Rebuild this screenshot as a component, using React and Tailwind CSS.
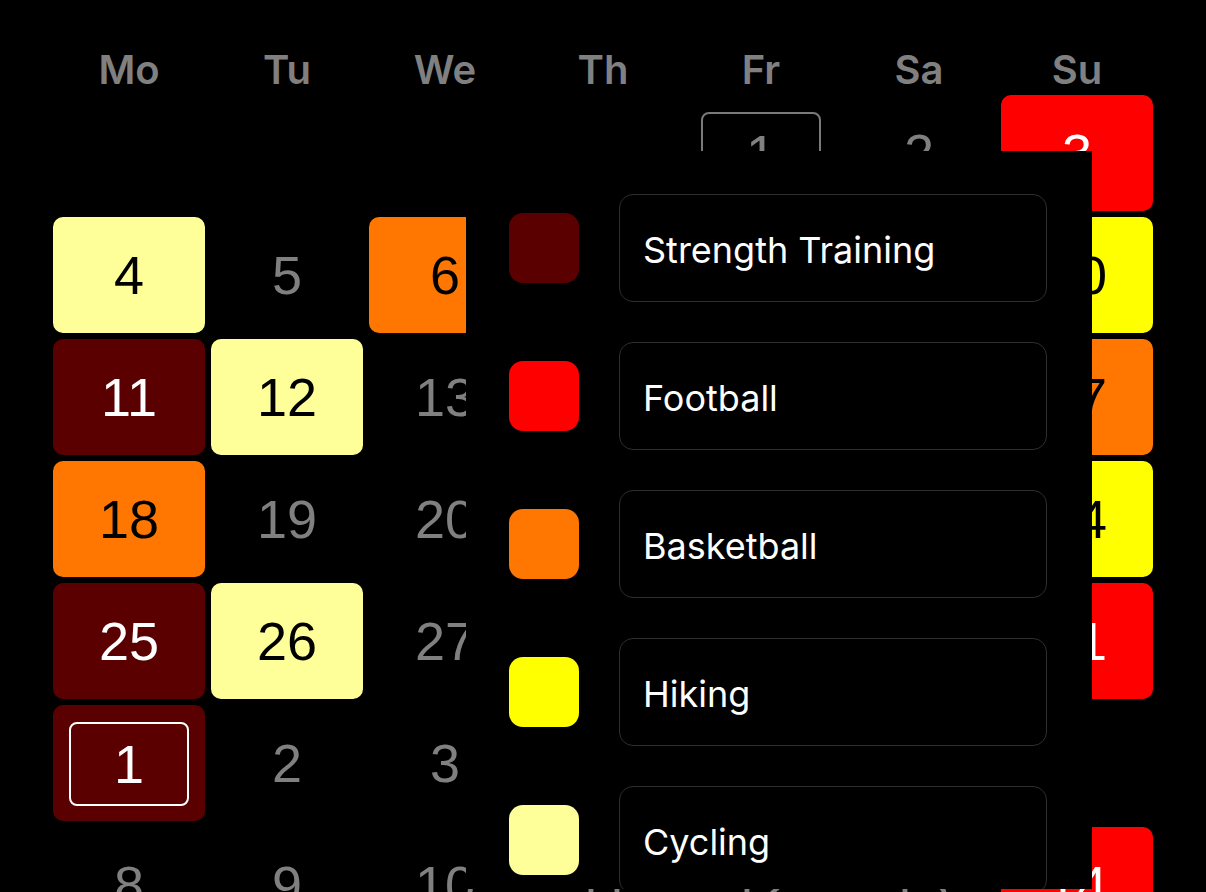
import React from "react";

// activity colours, same order as the legend
const ACTIVITIES = [
  { key: "strength", label: "Strength Training", swatch: "bg-[#5a0000]", cell: "bg-[#5a0000] text-white" },
  { key: "football", label: "Football", swatch: "bg-[#ff0000]", cell: "bg-[#ff0000] text-white" },
  { key: "basketball", label: "Basketball", swatch: "bg-[#ff7700]", cell: "bg-[#ff7700] text-black" },
  { key: "hiking", label: "Hiking", swatch: "bg-[#ffff00]", cell: "bg-[#ffff00] text-black" },
  { key: "cycling", label: "Cycling", swatch: "bg-[#ffff99]", cell: "bg-[#ffff99] text-black" },
];

const cellClass = Object.fromEntries(ACTIVITIES.map((a) => [a.key, a.cell]));

const DAYS = ["Mo", "Tu", "We", "Th", "Fr", "Sa", "Su"];

// March, starting on a Friday; first day of each month gets a ring
const WEEKS = [
  [null, null, null, null, { d: 1, ring: "gray" }, { d: 2 }, { d: 3, a: "football" }],
  [{ d: 4, a: "cycling" }, { d: 5 }, { d: 6, a: "basketball" }, { d: 7 }, { d: 8 }, { d: 9 }, { d: 10, a: "hiking" }],
  [{ d: 11, a: "strength" }, { d: 12, a: "cycling" }, { d: 13 }, { d: 14 }, { d: 15 }, { d: 16 }, { d: 17, a: "basketball" }],
  [{ d: 18, a: "basketball" }, { d: 19 }, { d: 20 }, { d: 21 }, { d: 22 }, { d: 23 }, { d: 24, a: "hiking" }],
  [{ d: 25, a: "strength" }, { d: 26, a: "cycling" }, { d: 27 }, { d: 28 }, { d: 29 }, { d: 30 }, { d: 31, a: "football" }],
  [{ d: 1, a: "strength", ring: "white" }, { d: 2 }, { d: 3 }, { d: 4 }, { d: 5 }, { d: 6 }, { d: 7 }],
  [{ d: 8 }, { d: 9 }, { d: 10 }, { d: 11 }, { d: 12 }, { d: 13 }, { d: 14, a: "football" }],
];

function DayCell({ day }) {
  if (!day) return <div className="h-[116px]" />;
  const color = day.a ? cellClass[day.a] : "text-[#808080]";
  return (
    <div
      className={`h-[116px] rounded-[10px] flex items-center justify-center text-[54px] leading-none ${color}`}
    >
      {day.ring ? (
        <div
          className={`w-[120px] h-[84px] mt-[2px] rounded-lg border-2 flex items-center justify-center ${
            day.ring === "white" ? "border-white" : "border-[#7a7a7a]"
          }`}
        >
          {day.d}
        </div>
      ) : (
        <span>{day.d}</span>
      )}
    </div>
  );
}

function LegendRow({ item }) {
  return (
    <div className="flex items-center gap-[40px]">
      <div className={`w-[70px] h-[70px] shrink-0 rounded-[14px] ${item.swatch}`} />
      <div className="flex-1 h-[108px] rounded-[14px] border-[1.5px] border-[#2e2e2e] pl-[23px] pt-[4px] flex items-center text-white text-[36px] leading-none">
        {item.label}
      </div>
    </div>
  );
}

export default function App() {
  return (
    <div className="relative w-[1206px] h-[892px] overflow-hidden bg-black font-['Liberation_Sans',Arial,sans-serif]">
      <div className="px-[53px]">
        {/* weekday header */}
        <div className="grid grid-cols-7 gap-x-[6px] h-[95px] pt-[50px]">
          {DAYS.map((d) => (
            <div
              key={d}
              className="text-center text-[40px] leading-none font-semibold text-[#808080] font-['Inter',sans-serif]"
            >
              {d}
            </div>
          ))}
        </div>

        {/* month grid */}
        <div className="grid grid-cols-7 gap-[6px]">
          {WEEKS.flatMap((week, wi) =>
            week.map((day, di) => <DayCell key={`${wi}-${di}`} day={day} />)
          )}
        </div>
      </div>

      {/* activity legend popover */}
      <div className="absolute left-[466px] top-[151px] w-[626px] h-[738px] overflow-hidden bg-black pl-[43px] pr-[45px] pt-[43px] flex flex-col gap-[40px] font-['Inter',sans-serif]">
        {ACTIVITIES.map((item) => (
          <LegendRow key={item.key} item={item} />
        ))}
      </div>
    </div>
  );
}
